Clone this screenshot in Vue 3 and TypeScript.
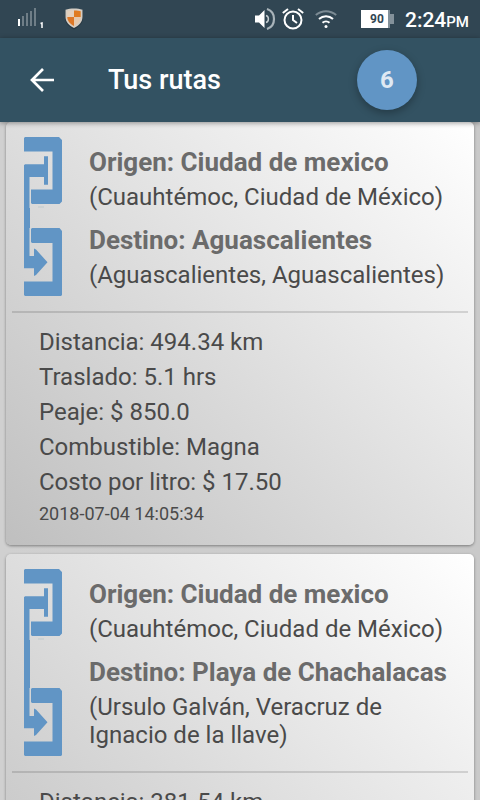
<script setup lang="ts">
interface Place {
  label: string
  name: string
  region: string
}

interface Route {
  id: number
  places: Place[]
  details: string[]
  date?: string
}

const routes: Route[] = [
  {
    id: 1,
    places: [
      { label: 'Origen', name: 'Ciudad de mexico', region: '(Cuauhtémoc, Ciudad de México)' },
      { label: 'Destino', name: 'Aguascalientes', region: '(Aguascalientes, Aguascalientes)' },
    ],
    details: [
      'Distancia: 494.34 km',
      'Traslado: 5.1 hrs',
      'Peaje: $ 850.0',
      'Combustible: Magna',
      'Costo por litro: $ 17.50',
    ],
    date: '2018-07-04 14:05:34',
  },
  {
    id: 2,
    places: [
      { label: 'Origen', name: 'Ciudad de mexico', region: '(Cuauhtémoc, Ciudad de México)' },
      { label: 'Destino', name: 'Playa de Chachalacas', region: '(Ursulo Galván, Veracruz de Ignacio de la llave)' },
    ],
    details: ['Distancia: 381.54 km'],
  },
]
</script>

<template>
  <div class="screen">
    <div class="status">
      <div class="status-group">
        <svg class="signal" width="28" height="22" viewBox="0 0 28 22" aria-hidden="true">
          <rect x="1" y="11" width="2" height="7" fill="#fff" />
          <g fill="#6f7e87">
            <rect x="5" y="8" width="2" height="10" />
            <rect x="9" y="5" width="2" height="13" />
            <rect x="13" y="3" width="2" height="15" />
            <rect x="17" y="0" width="2" height="18" />
          </g>
          <path d="M23.500 15.500 25 15v5" fill="none" stroke="#fff" stroke-width="1.500" />
        </svg>
        <svg class="shield" width="20" height="22" viewBox="0 0 20 22" aria-hidden="true">
          <path d="M10 1C13 1 16 1.600 19 2.200V10c0 5-4 9-9 11.400C5 19 1 15 1 10V2.200C4 1.600 7 1 10 1Z" fill="#263640" />
          <path d="M10 .5C13 .5 16 1 18.500 1.800V9c0 5-3.500 8.500-8.500 11C5 17.500 1.500 14 1.500 9V1.800C4 1 7 .5 10 .5Z" fill="#d5cdc3" />
          <path d="M10 2.500C6.500 2.500 5 2.800 3.300 3.300V9H10Z" fill="#e3d0bd" />
          <path d="M10 2.500c3.500 0 5 .3 6.700.8V9H10Z" fill="#e07b20" />
          <path d="M3.300 9H10v9C6 15.800 3.300 13 3.300 9Z" fill="#dc7726" />
          <path d="M16.700 9H10v9c4-2.200 6.700-5 6.700-9Z" fill="#e5c8ac" />
        </svg>
      </div>
      <div class="status-group">
        <svg class="sound" width="22" height="22" viewBox="0 0 22 22" aria-hidden="true">
          <path d="M1 7.500h4L10.500 2v18L5 14.500H1Z" fill="#fff" />
          <path d="M12 7.500c3.200.8 3.200 6.200 0 7" fill="none" stroke="#c5cdd1" stroke-width="1.500" />
          <path d="M13 1c4.500 1.500 7 5.500 7 10s-2.500 8.500-7 10" fill="none" stroke="#a9b4ba" stroke-width="2.200" />
        </svg>
        <svg class="alarm" width="22" height="22" viewBox="0 0 22 22" aria-hidden="true">
          <g fill="none" stroke="#fff" stroke-width="2">
            <circle cx="11" cy="12" r="8.500" />
            <path d="M11 7v5l4 3M.8 5 6 1M21.200 5 16 1" />
          </g>
        </svg>
        <svg class="wifi" width="22" height="20" viewBox="0 0 22 20" aria-hidden="true">
          <g fill="none" stroke-width="2">
            <path d="M.8 6C7 1 15 1 21.200 6" stroke="#7c8b94" />
            <path d="M4 10C8 6.300 14 6.300 18 10M7.500 13.800c2-1.800 5-1.800 7 0" stroke="#fff" />
          </g>
          <circle cx="11" cy="17.500" r="1.500" fill="#fff" />
        </svg>
        <svg class="battery" width="33" height="18" viewBox="0 0 33 18" aria-label="90">
          <path d="M27 0h2v4h4v10h-4v4h-2Z" fill="#83919a" />
          <rect width="27" height="18" fill="#fff" />
          <text x="16" y="13" text-anchor="middle" class="battery-level">90</text>
        </svg>
        <div class="clock">2:24<span class="meridiem">PM</span></div>
      </div>
    </div>

    <header class="toolbar">
      <button class="back" type="button" aria-label="Atrás">
        <svg width="24" height="24" viewBox="0 0 24 24" aria-hidden="true">
          <path d="M24 12H2M13 1 2 12l11 11" fill="none" stroke="#fff" stroke-width="2.700" />
        </svg>
      </button>
      <h1 class="title">Tus rutas</h1>
      <button class="count" type="button">6</button>
    </header>

    <main class="list">
      <article v-for="route in routes" :key="route.id" class="card">
        <div class="route">
          <div class="track" aria-hidden="true">
            <svg width="38" height="71" viewBox="0 0 38 71">
              <path
                d="M1 0H35L38 3V64.500L35.500 67H8L7 66V52.500H28.500V14.500H0V1ZM0 28.300 1 27.300H20V19.300H24V47.700H20V40H5.500V71H0Z"
              />
              <rect x="14" y="69" width="6" height="2" class="smudge" />
            </svg>
            <div class="line"></div>
            <svg width="38" height="68" viewBox="0 0 38 68">
              <path
                d="M8 0H35.500L38 3V67L37 68H1L0 67V53.500H28.500V15H8L7 14V1ZM0 0H5.500V28H10V20.500L12 21.500 23.500 34.300 12 47 10 48V40.300H0Z"
              />
            </svg>
          </div>
          <div class="places">
            <div v-for="place in route.places" :key="place.label" class="place">
              <h2 class="name">{{ place.label }}: {{ place.name }}</h2>
              <p class="region">{{ place.region }}</p>
            </div>
          </div>
        </div>
        <div class="details">
          <p v-for="detail in route.details" :key="detail" class="detail">{{ detail }}</p>
          <time v-if="route.date" class="date">{{ route.date }}</time>
        </div>
      </article>
    </main>
  </div>
</template>

<style>
body {
  margin: 0;
  background: #cdcdcd;
}
</style>

<style scoped>
.screen {
  display: flex;
  flex-direction: column;
  height: 100vh;
  overflow: hidden;
  font-family: Roboto, sans-serif;
  color: #4a4a4a;
  background: linear-gradient(90deg, #d0d0d0, #c9c9c9);
}

h1,
h2,
p {
  margin: 0;
}

button {
  padding: 0;
  border: 0;
  font: inherit;
  cursor: pointer;
}

svg {
  display: block;
  flex: none;
}

.status {
  display: flex;
  flex: none;
  align-items: center;
  justify-content: space-between;
  box-sizing: border-box;
  height: 38px;
  padding: 0 11px 0 17px;
  background: #314653;
}

.status-group {
  display: flex;
  align-items: center;
}

.shield {
  margin-left: 19px;
}

.alarm {
  margin-left: 6px;
}

.wifi {
  margin-left: 11px;
}

.battery {
  margin-left: 24px;
}

.battery-level {
  font-size: 12px;
  font-weight: 700;
  fill: #314653;
}

.clock {
  margin-left: 11px;
  padding-top: 3px;
  font-size: 21px;
  font-weight: 500;
  line-height: 24px;
  color: #fff;
}

.meridiem {
  font-size: 15px;
}

.toolbar {
  position: relative;
  z-index: 1;
  display: flex;
  flex: none;
  align-items: center;
  box-sizing: border-box;
  height: 84px;
  padding: 0 63px 0 30px;
  background: #335262;
  box-shadow: 0 1px 5px rgba(0, 0, 0, 0.4);
}

.back {
  background: none;
}

.title {
  flex: 1;
  margin-left: 54px;
  font-size: 27px;
  font-weight: 500;
  line-height: 32px;
  color: #fff;
}

.count {
  width: 60px;
  height: 60px;
  border-radius: 50%;
  font-size: 24px;
  font-weight: 700;
  color: #dfe9f3;
  background: #6195c5;
  box-shadow: 0 3px 8px rgba(0, 0, 0, 0.3);
}

.list {
  display: flex;
  flex: 1;
  flex-direction: column;
  gap: 9px;
  min-height: 0;
  padding: 0 6px;
  overflow-y: auto;
  scrollbar-width: none;
}

.card {
  flex: none;
  box-sizing: border-box;
  min-height: 423px;
  border-radius: 5px;
  background: linear-gradient(45deg, #bfbfbf, #ffffff);
  box-shadow: 0 1px 3px rgba(0, 0, 0, 0.4);
}

.route {
  display: flex;
  gap: 27px;
  margin: 0 6px;
  padding: 15px 12px;
  border-bottom: 2px solid rgba(0, 0, 0, 0.13);
}

.track {
  display: flex;
  flex: none;
  flex-direction: column;
  fill: #6195c5;
}

.line {
  flex: 1;
  width: 6px;
  background: #6195c5;
}

.smudge {
  fill: #cdd2d3;
}

.places {
  display: flex;
  flex: 1;
  flex-direction: column;
  gap: 14px;
  padding: 10px 0 7px;
}

.place {
  display: flex;
  flex-direction: column;
  gap: 6px;
}

.name {
  font-size: 26px;
  font-weight: 700;
  line-height: 30px;
  color: #6b6b6b;
}

.region,
.detail {
  font-size: 24px;
  line-height: 28px;
}

.details {
  display: flex;
  flex-direction: column;
  gap: 7px;
  padding: 15px 33px 21px;
}

.date {
  font-size: 18px;
  line-height: 21px;
}
</style>
